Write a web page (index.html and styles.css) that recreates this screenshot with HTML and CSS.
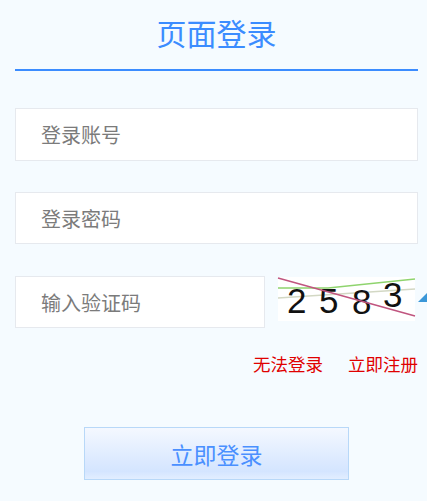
FILE: index.html
```html
<!DOCTYPE html>
<html lang="zh">
<head>
<meta charset="utf-8">
<title>页面登录</title>
<link rel="stylesheet" href="styles.css">
</head>
<body>
<main class="login">
  <h1 class="title">页面登录</h1>
  <div class="field field-first">登录账号</div>
  <div class="field">登录密码</div>
  <div class="captcha-row">
    <div class="field field-short">输入验证码</div>
    <svg class="captcha" viewBox="0 0 137 44" width="137" height="44" aria-label="2583">
      <rect width="137" height="44" fill="#fff"/>
      <path d="M0 21 L137 12" stroke="#d3d8c4" stroke-width="1.4" fill="none"/>
      <path d="M0 11 L50 11 L137 2" stroke="#8fd46e" stroke-width="1.5" fill="none"/>
      <text class="digit" x="9" y="36" font-size="35">2</text>
      <text class="digit" x="41" y="36" font-size="35">5</text>
      <text class="digit" x="74" y="37" font-size="35">8</text>
      <text class="digit" x="105" y="30" font-size="35">3</text>
      <path d="M0 1 L137 39" stroke="#c0557f" stroke-width="1.5" fill="none"/>
    </svg>
    <span class="corner"></span>
  </div>
  <div class="links"><a class="link">无法登录</a><a class="link">立即注册</a></div>
  <button class="submit" type="button">立即登录</button>
</main>
</body>
</html>
```
FILE: styles.css
```css
html, body { margin: 0; padding: 0; }
body {
  width: 427px;
  height: 501px;
  overflow: hidden;
  background: #f5fbff;
  font-family: "Noto Sans CJK SC", "Liberation Sans", sans-serif;
}
.login { padding: 0 9px 0 15px; display: flex; flex-direction: column; }
.title {
  margin: 0 0 37px;
  height: 69px;
  line-height: 64px;
  border-bottom: 2px solid #3b8cff;
  text-align: center;
  font-size: 30px;
  font-weight: 400;
  color: #3b8cff;
}
.field {
  box-sizing: border-box;
  height: 52px;
  margin-bottom: 32px;
  padding-left: 25px;
  background: #fff;
  border: 1px solid #e6e9ee;
  font-size: 20px;
  line-height: 51px;
  color: #7b7b7b;
}
.field-first { height: 53px; margin-bottom: 31px; }
.captcha-row { display: flex; align-items: flex-start; gap: 13px; position: relative; height: 53px; }
.field-short { width: 250px; margin: 0; }
.captcha { display: block; margin-top: 1px; flex: none; overflow: visible; }
.digit { font-family: "Liberation Sans", sans-serif; fill: #111; }
.corner {
  position: absolute;
  right: -9px;
  top: 17px;
  width: 0;
  height: 0;
  border-left: 9px solid transparent;
  border-bottom: 9px solid #3b97d8;
}
.links { display: flex; justify-content: flex-end; gap: 25px; margin-top: 23px; height: 24px; }
.link { font-size: 17.5px; line-height: 24px; color: #e00000; }
.submit {
  box-sizing: border-box;
  width: 265px;
  height: 53px;
  margin: 51px 0 0 69px;
  padding: 0;
  border: 1px solid #b8d8f8;
  background: linear-gradient(#f4f8ff, #d4e5ff 85%, #e2eeff);
  font-family: inherit;
  font-size: 23px;
  color: #4a90ff;
}
```
